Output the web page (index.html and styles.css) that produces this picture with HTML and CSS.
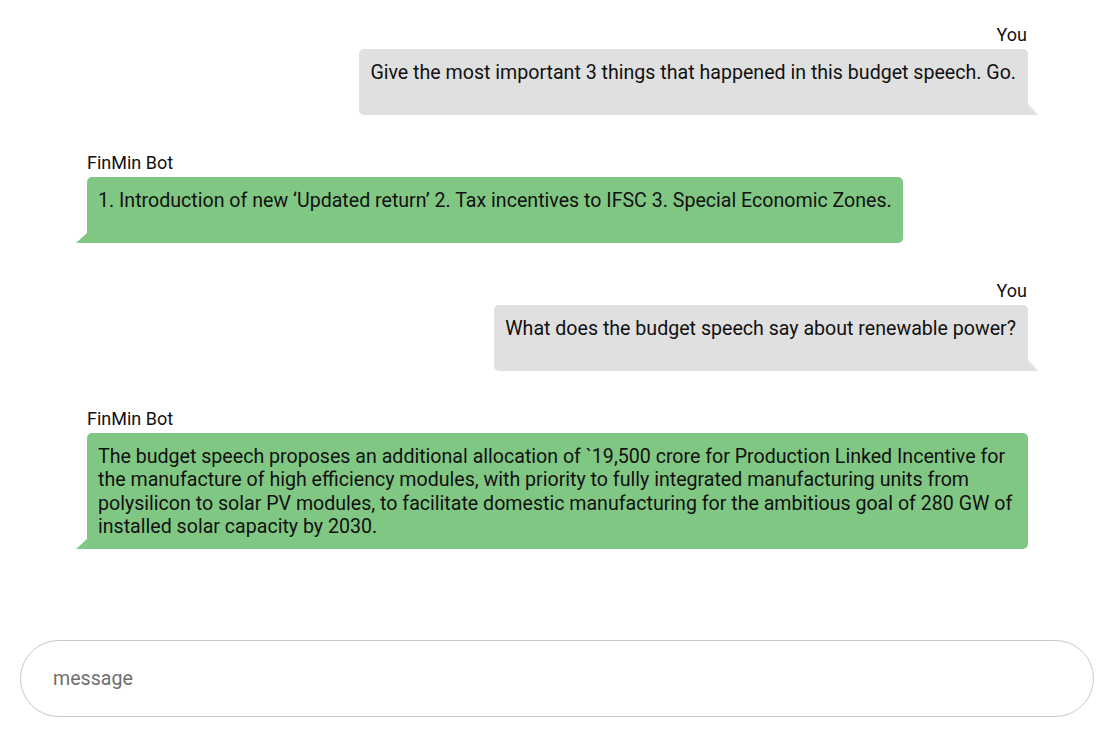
FILE: index.html
```html
<!DOCTYPE html>
<html lang="en">
<head>
<meta charset="utf-8">
<title>FinMin Bot</title>
<link rel="stylesheet" href="styles.css">
</head>
<body>
<div class="app">
  <div class="chat">
    <div class="msg user">
      <div class="label">You</div>
      <div class="bubble">Give the most important 3 things that happened in this budget speech. Go.</div>
    </div>
    <div class="msg bot">
      <div class="label">FinMin Bot</div>
      <div class="bubble">1. Introduction of new ‘Updated return’ 2. Tax incentives to IFSC 3. Special Economic Zones.</div>
    </div>
    <div class="msg user">
      <div class="label">You</div>
      <div class="bubble">What does the budget speech say about renewable power?</div>
    </div>
    <div class="msg bot">
      <div class="label">FinMin Bot</div>
      <div class="bubble">The budget speech proposes an additional allocation of `19,500 crore for Production Linked Incentive for the manufacture of high efficiency modules, with priority to fully integrated manufacturing units from polysilicon to solar PV modules, to facilitate domestic manufacturing for the ambitious goal of 280 GW of installed solar capacity by 2030.</div>
    </div>
  </div>
  <div class="composer">
    <input class="input" type="text" placeholder="message">
  </div>
</div>
</body>
</html>
```
FILE: styles.css
```css
* { box-sizing: border-box; }
html, body { margin: 0; padding: 0; background: #fff; }
body { font-family: Roboto, "Noto Sans", sans-serif; color: #111; }
.app { height: 743px; display: flex; flex-direction: column; }
.chat { flex: 1; display: flex; flex-direction: column; padding: 24px 79px 0 87px; }
.msg { display: flex; flex-direction: column; max-width: 100%; }
.msg + .msg { margin-top: 37px; }
.msg.user { align-self: flex-end; align-items: flex-end; }
.msg.bot { align-self: flex-start; align-items: flex-start; }
.label { font-size: 18px; line-height: 21px; margin-bottom: 4px; color: #111; }
.user .label { margin-right: 1px; }
.bubble { position: relative; font-size: 19.6px; line-height: 23.3px; padding: 12px 11px 11px; min-height: 66px; border-radius: 5px; }
.user .bubble { background: #e0e0e0; border-bottom-right-radius: 0; padding-right: 12px; }
.bot .bubble { background: #81c784; border-bottom-left-radius: 0; }
.user .bubble::after { content: ""; position: absolute; right: -10px; bottom: 0; width: 0; height: 0; border-left: 10px solid #e0e0e0; border-top: 11px solid transparent; }
.bot .bubble::after { content: ""; position: absolute; left: -11px; bottom: 0; width: 0; height: 0; border-right: 11px solid #81c784; border-top: 10px solid transparent; }
.composer { padding: 0 13px 26px 20px; }
.input { display: block; width: 100%; height: 77px; border: 1px solid #c8c8c8; border-radius: 39px; padding: 0 32px; font-family: Roboto, "Noto Sans", sans-serif; font-size: 19.6px; color: #111; outline: none; background: #fff; }
.input::placeholder { color: #6f6f6f; }
```
